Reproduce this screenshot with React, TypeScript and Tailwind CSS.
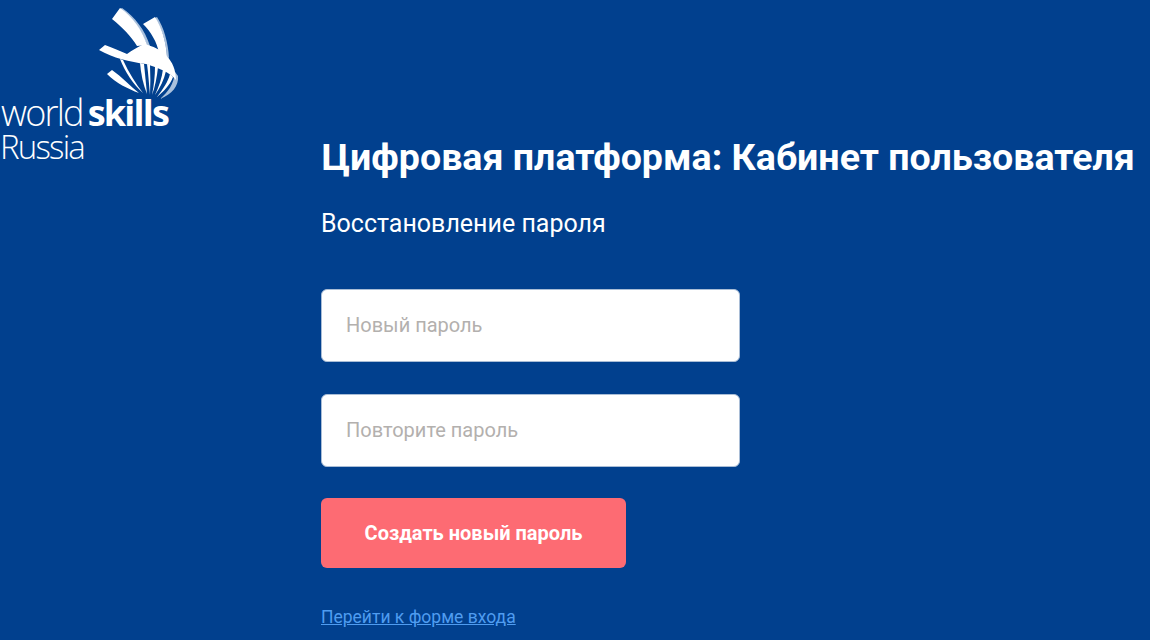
export default function App() {
  const roboto = "font-['Roboto',sans-serif]";
  return (
    <div className={`flex h-[640px] w-[1150px] overflow-hidden bg-[#01408e] ${roboto}`}>
      <div className="w-[321px] shrink-0">
        <div className="relative h-[170px] w-[200px]">
          <svg viewBox="0 0 200 170" className="h-[110px] w-[200px]" preserveAspectRatio="xMinYMin slice">
            <path d="M122 8 C135 17 145 30 150 46 L147 46 C142 31 133 18 120 9Z" fill="#a9c0dc" />
            <path d="M157 17 C164 28 168 42 169 58 L167 57 C166 42 162 29 155 18Z" fill="#a9c0dc" />
            <path d="M178 76 C179 86 172 94 160 99 C168 92 174 84 175 72Z" fill="#a9c0dc" />
            <g fill="#fff">
              <path d="M112 19 L120 8 C133 17 142 30 147 45 L137 46 C131 36 122 27 112 19Z" />
              <path d="M143 24 L155 17 C162 28 166 42 167 57 L159 53 C157 42 151 32 143 24Z" />
              <path d="M99 50 L105 45 C113 48 120 51 127 54 C132 50 138 47 144 44 C162 48 176 60 176 80 C170 72 158 68 146 64 C130 62 113 58 99 50Z" />
              <path d="M107 74 L112 70 C122 77 130 86 139 93 C128 89 116 83 107 74Z" />
              <path d="M120 59 L123 60 C129 73 136 84 143 93 C133 84 125 72 120 59Z" />
              <path d="M140 63 L144 64 C145 74 146 84 147 94 C143 84 141 74 140 63Z" />
              <path d="M147 64 L150 65 C150.5 75 150.5 85 150 95 C149 85 148.5 75 147 64Z" />
              <path d="M155 66 L158 67 C157 77 155 87 152 95 C154 85 155 76 155 66Z" />
              <path d="M163 69 L166 71 C164 80 160 88 155 95 C159 86 162 78 163 69Z" />
              <path d="M170 74 L173 77 C170 85 164 91 157 97 C163 89 168 82 170 74Z" />
            </g>
          </svg>
          <div className="absolute left-[1px] top-[97px] whitespace-nowrap font-['Open_Sans',sans-serif] text-[36px] leading-[32px] tracking-[-1.8px] text-white">
            <span className="font-light">world</span>
            <span className="ml-[5px] font-bold">skills</span>
          </div>
          <div className="absolute left-0 top-[131px] font-['Open_Sans',sans-serif] text-[33px] font-light leading-[31px] tracking-[-1.8px] text-white">
            Russia
          </div>
        </div>
      </div>
      <div className="flex flex-1 flex-col items-start pt-[134px]">
        <h1 className="ml-[0.5px] whitespace-nowrap text-[37.6px] font-bold leading-[46px] text-white">
          Цифровая платформа: Кабинет пользователя
        </h1>
        <p className="mt-[29px] text-[25px] leading-[30px] text-white">Восстановление пароля</p>
        <input
          placeholder="Новый пароль"
          className="mt-[50px] h-[73px] w-[419px] rounded-[6px] border border-[#a9bdd6] bg-white px-6 pb-[2px] text-[20px] placeholder:text-[#b3b0ae]"
        />
        <input
          placeholder="Повторите пароль"
          className="mt-[32px] h-[73px] w-[419px] rounded-[6px] border border-[#a9bdd6] bg-white px-6 pb-[2px] text-[20px] placeholder:text-[#b3b0ae]"
        />
        <button className="mt-[31px] h-[70px] w-[305px] rounded-[6px] bg-[#fd6b73] text-[20px] font-bold text-white">
          Создать новый пароль
        </button>
        <a href="#" className="mt-[38px] text-[17.5px] leading-[22px] text-[#4f9cf0] underline">
          Перейти к форме входа
        </a>
      </div>
    </div>
  );
}
